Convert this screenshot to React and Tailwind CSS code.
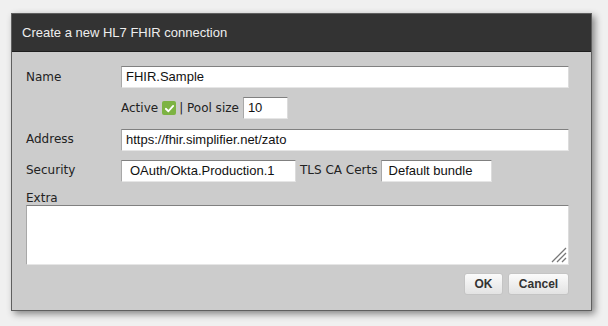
import React from "react";

const sans = { fontFamily: '"Liberation Sans", Arial, sans-serif' };
const dv = { fontFamily: '"DejaVu Sans", Verdana, sans-serif' };

function Field({ className = "", children }) {
  return (
    <div
      className={`h-[22px] bg-white border-t border-t-[#808080] border-l border-l-[#a8a8a8] border-b border-b-[#e6e6e6] border-r border-r-[#dcdcdc] flex items-center text-[13px] text-[#111] ${className}`}
      style={sans}
    >
      {children}
    </div>
  );
}

export default function App() {
  return (
    <div className="w-[608px] h-[326px] bg-[#f0f0f0] pt-[13px] pl-[11px]">
      <div className="w-[581px] h-[298px] border border-[#5f5f5f] bg-[#cccccc] shadow-[3px_3px_7px_rgba(0,0,0,0.45)] flex flex-col">
        <div
          className="h-[38px] bg-[#333333] border-b border-[#1e1e1e] flex items-center pl-[10px] text-[13px] text-[#eeeeee]"
          style={sans}
        >
          Create a new HL7 FHIR connection
        </div>
        <div className="flex-1 flex flex-col pl-[14px] pr-[22px] pt-[14px] text-[12px] text-[#222]" style={dv}>
          <div className="flex items-center">
            <div className="w-[95px]">Name</div>
            <Field className="flex-1 pl-[4px]">FHIR.Sample</Field>
          </div>
          <div className="flex items-center mt-[9px] pl-[95px]">
            <span>Active</span>
            <span className="ml-[4px] w-[14px] h-[14px] rounded-[2px] bg-[#7db343] flex items-center justify-center">
              <svg width="11" height="11" viewBox="0 0 12 12">
                <path d="M2 6.3 L4.8 9 L10 3.2" stroke="white" strokeWidth="2" fill="none" strokeLinecap="round" strokeLinejoin="round" />
              </svg>
            </span>
            <span className="ml-[3px]">| Pool size</span>
            <Field className="ml-[4px] w-[45px] pl-[4px]">10</Field>
          </div>
          <div className="flex items-center mt-[10px]">
            <div className="w-[95px] -mt-[3px]">Address</div>
            <Field className="flex-1 pl-[4px]">https://fhir.simplifier.net/zato</Field>
          </div>
          <div className="flex items-center mt-[9px]">
            <div className="w-[95px] -mt-[3px]">Security</div>
            <Field className="w-[175px] pl-[8px]">OAuth/Okta.Production.1</Field>
            <div className="ml-[4px] mr-[3px] -mt-[3px]">TLS CA Certs</div>
            <Field className="w-[111px] pl-[7px]">Default bundle</Field>
          </div>
          <div className="mt-[9px] leading-[14px]">Extra</div>
          <div className="relative h-[60px] bg-white border-t border-t-[#808080] border-l border-l-[#a8a8a8] border-b border-b-[#e6e6e6] border-r border-r-[#dcdcdc]">
            <svg className="absolute right-[1px] bottom-[1px]" width="16" height="16" viewBox="0 0 16 16">
              <path d="M1 15 L15 1 M6 15 L15 6 M11 15 L15 11" stroke="#777" strokeWidth="1.3" fill="none" />
            </svg>
          </div>
          <div className="flex justify-end gap-[5px] mt-[8px]" style={sans}>
            <div className="w-[39px] h-[22px] rounded-[3px] border border-[#c4c4c4] bg-gradient-to-b from-[#fbfbfb] to-[#e3e3e3] flex items-center justify-center text-[12px] font-bold text-[#333]">
              OK
            </div>
            <div className="w-[61px] h-[22px] rounded-[3px] border border-[#c4c4c4] bg-gradient-to-b from-[#fbfbfb] to-[#e3e3e3] flex items-center justify-center text-[12px] font-bold text-[#333]">
              Cancel
            </div>
          </div>
        </div>
      </div>
    </div>
  );
}
